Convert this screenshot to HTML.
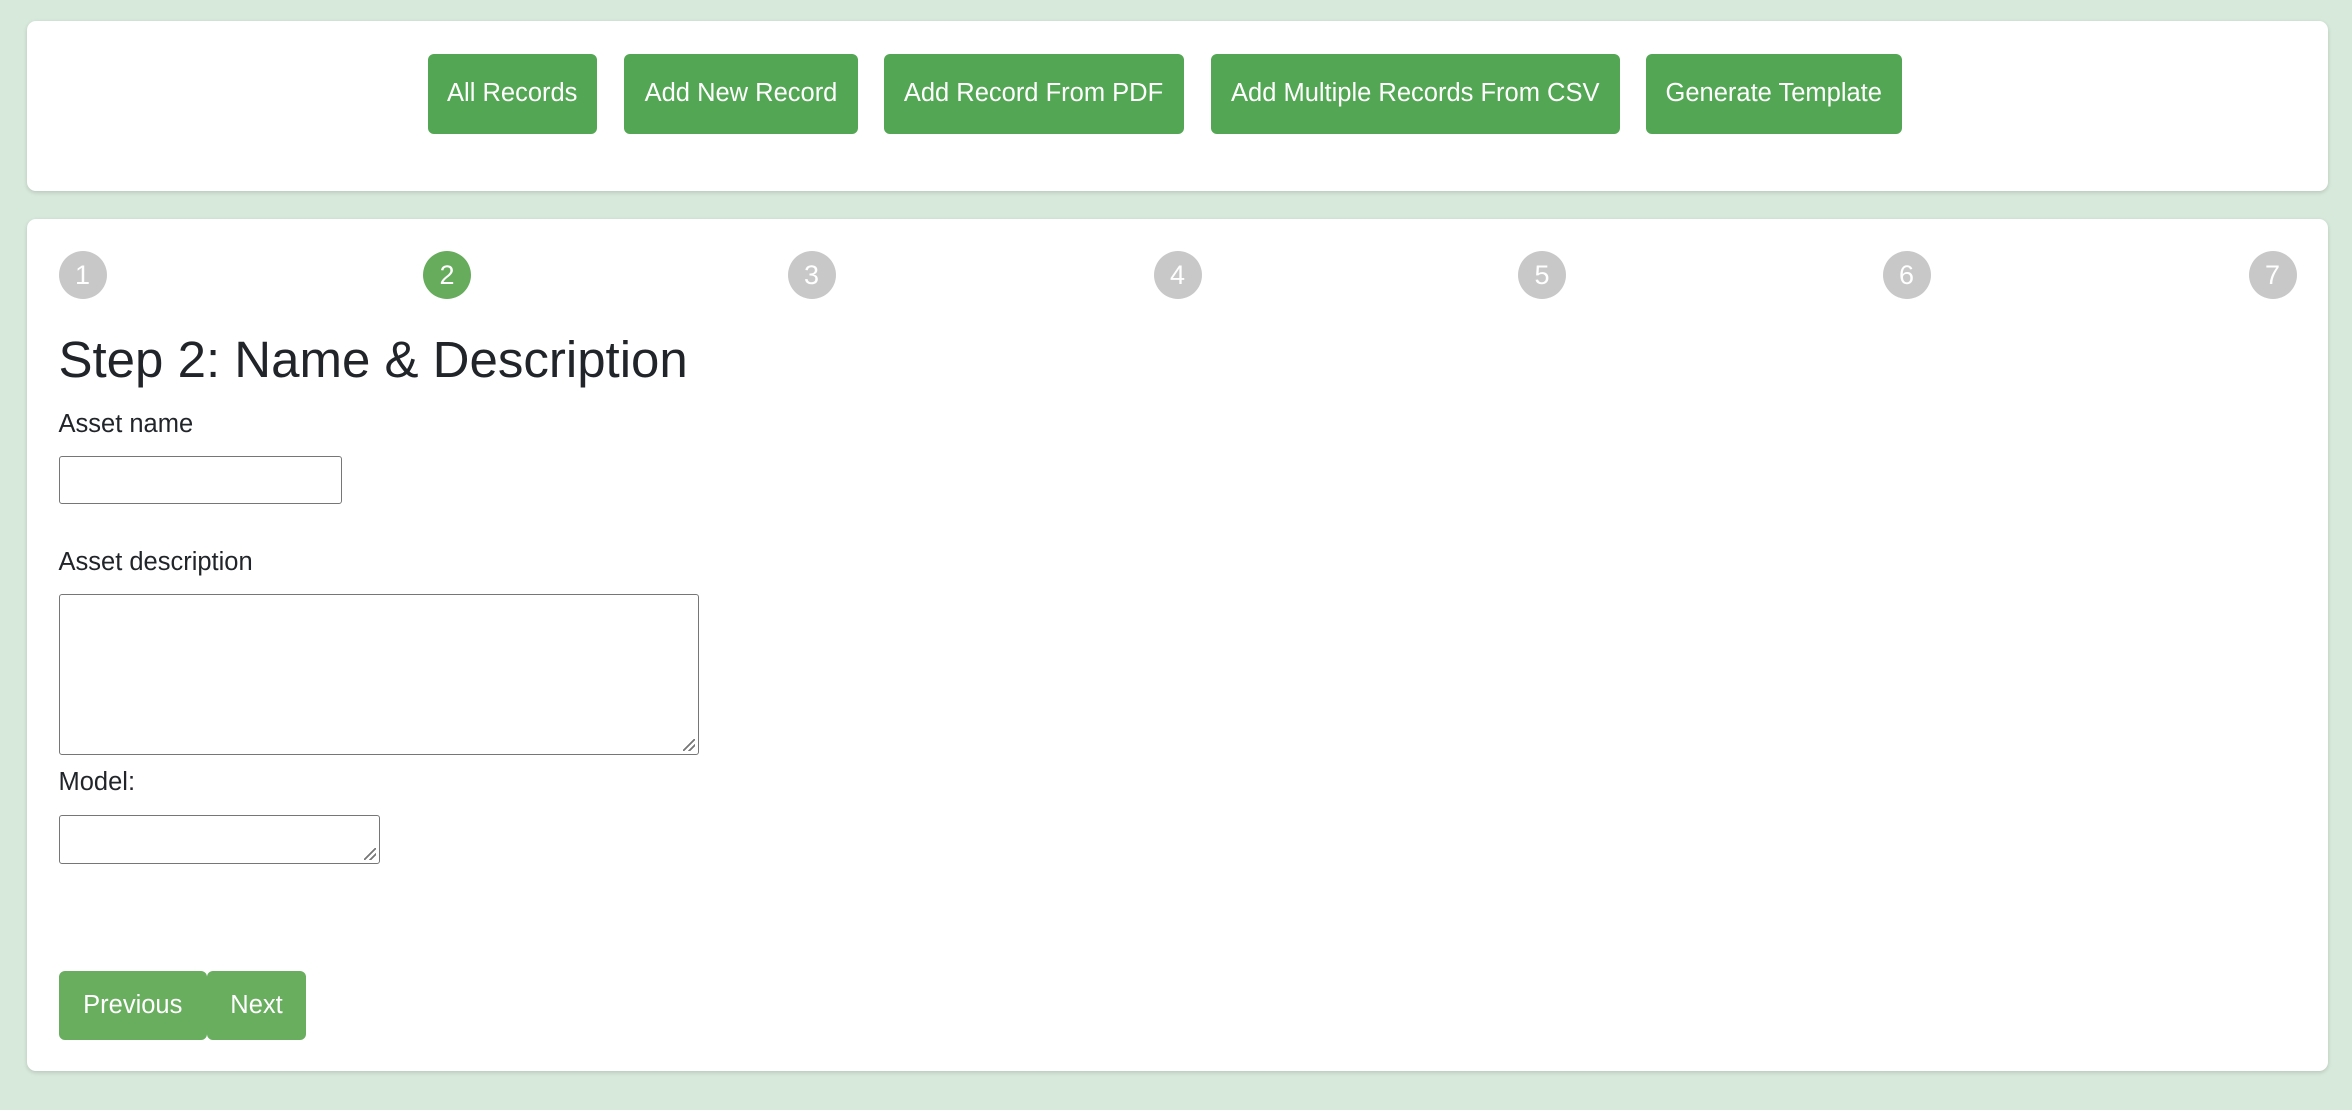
<!DOCTYPE html>
<html><head><meta charset="utf-8"><style>
html{zoom:1.5}
body{margin:0;width:1568px;height:740px;background:#d7e9da;font-family:"Liberation Sans",Arial,sans-serif;color:#212529;position:relative;overflow:hidden}
.card{position:absolute;left:18px;width:1534px;background:#fff;border-radius:6px;box-shadow:0 1px 3px rgba(0,0,0,.15)}
.btn{position:absolute;top:22px;height:53px;line-height:53px;background:#53a653;color:#fff;font-size:17px;border-radius:4px;text-align:center}
.c{position:absolute;top:21px;width:32px;height:32px;border-radius:50%;background:#c8c8c8;color:#fff;font-size:18px;line-height:32px;text-align:center}
.lbl{position:absolute;left:21px;font-size:17px}
.in{position:absolute;left:21px;border:1px solid #767676;border-radius:2px;box-sizing:border-box}
.g{position:absolute;top:501px;height:46px;line-height:46px;background:#69ad5f;color:#fff;font-size:17px;text-align:center;border-radius:4px}
.rz{position:absolute;right:2px;bottom:2px;width:8px;height:8px;background:linear-gradient(135deg,transparent 45%,#777 45%,#777 55%,transparent 55%,transparent 70%,#777 70%,#777 80%,transparent 80%)}
</style></head><body>
<div class="card" style="top:14px;height:113px">
<div class="btn" style="left:267px;width:113px">All Records</div>
<div class="btn" style="left:398px;width:156px">Add New Record</div>
<div class="btn" style="left:571px;width:200px">Add Record From PDF</div>
<div class="btn" style="left:789px;width:273px">Add Multiple Records From CSV</div>
<div class="btn" style="left:1079px;width:171px">Generate Template</div>
</div>
<div class="card" style="top:146px;height:568px">
<div class="c" style="left:21px">1</div>
<div class="c" style="left:264px;background:#66ac5c">2</div>
<div class="c" style="left:507px">3</div>
<div class="c" style="left:751px">4</div>
<div class="c" style="left:994px">5</div>
<div class="c" style="left:1237px">6</div>
<div class="c" style="left:1481px">7</div>
<div style="position:absolute;left:21px;top:74px;font-size:34px">Step 2: Name &amp; Description</div>
<div class="lbl" style="top:127px">Asset name</div>
<div class="in" style="top:158px;width:189px;height:32px"></div>
<div class="lbl" style="top:219px">Asset description</div>
<div class="in" style="top:250px;width:427px;height:107px"><div class="rz"></div></div>
<div class="lbl" style="top:366px">Model:</div>
<div class="in" style="top:397px;width:214px;height:33px"><div class="rz"></div></div>
<div class="g" style="left:21px;width:99px">Previous</div>
<div class="g" style="left:120px;width:66px">Next</div>
</div>
</body></html>
